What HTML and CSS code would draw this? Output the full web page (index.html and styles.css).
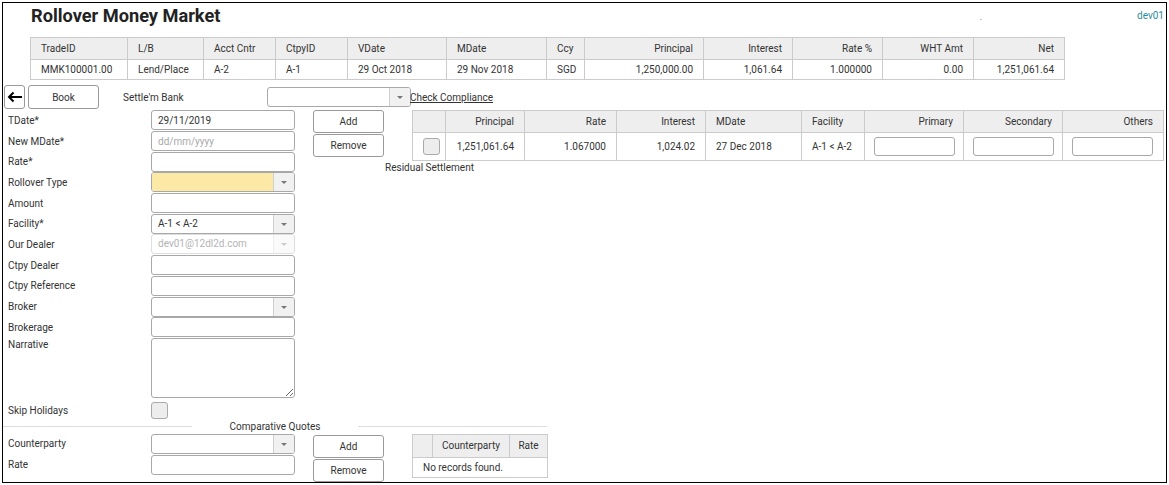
FILE: index.html
```html
<!DOCTYPE html>
<html>
<head>
    <title>Rollover Money Market</title>
    <link rel="stylesheet" href="styles.css">
</head>
<body>
    <div class="frame">
        <div class="header">
            <h1 class="title">Rollover Money Market</h1>
            <span class="dot">.</span>
            <a class="user" href="#">dev01</a>
        </div>

        <table class="grid trade">
            <colgroup>
                <col style="width:97px"><col style="width:76px"><col style="width:72px"><col style="width:72px">
                <col style="width:99px"><col style="width:100px"><col style="width:38px"><col style="width:119px">
                <col style="width:89px"><col style="width:90px"><col style="width:91px"><col style="width:91px">
            </colgroup>
            <tr>
                <th>TradeID</th><th>L/B</th><th>Acct Cntr</th><th>CtpyID</th><th>VDate</th><th>MDate</th><th>Ccy</th>
                <th class="num">Principal</th><th class="num">Interest</th><th class="num">Rate %</th><th class="num">WHT Amt</th><th class="num">Net</th>
            </tr>
            <tr>
                <td>MMK100001.00</td><td>Lend/Place</td><td>A-2</td><td>A-1</td><td>29 Oct 2018</td><td>29 Nov 2018</td><td>SGD</td>
                <td class="num">1,250,000.00</td><td class="num">1,061.64</td><td class="num">1.000000</td><td class="num">0.00</td><td class="num">1,251,061.64</td>
            </tr>
        </table>

        <div class="toolbar">
            <button class="btn back">
                <svg width="15" height="12" viewBox="0 0 15 12"><path d="M15 6H2M6.5 1.5L2 6l4.5 4.5" fill="none" stroke="#000" stroke-width="2"/></svg>
            </button>
            <button class="btn book">Book</button>
            <span class="bank-label">Settle'm Bank</span>
            <div class="select bank"><span class="val"></span><span class="arrow"></span></div>
            <a class="link" href="#">Check Compliance</a>
        </div>

        <div class="main">
            <div class="form">
                <div class="row"><label>TDate*</label><input class="field" type="text" value="29/11/2019"></div>
                <div class="row"><label>New MDate*</label><input class="field" type="text" placeholder="dd/mm/yyyy"></div>
                <div class="row"><label>Rate*</label><input class="field" type="text"></div>
                <div class="row"><label>Rollover Type</label><div class="select required"><span class="val"></span><span class="arrow"></span></div></div>
                <div class="row"><label>Amount</label><input class="field" type="text"></div>
                <div class="row"><label>Facility*</label><div class="select"><span class="val">A-1 &lt; A-2</span><span class="arrow"></span></div></div>
                <div class="row"><label>Our Dealer</label><div class="select disabled"><span class="val">dev01@12dl2d.com</span><span class="arrow"></span></div></div>
                <div class="row"><label>Ctpy Dealer</label><input class="field" type="text"></div>
                <div class="row"><label>Ctpy Reference</label><input class="field" type="text"></div>
                <div class="row"><label>Broker</label><div class="select"><span class="val"></span><span class="arrow"></span></div></div>
                <div class="row"><label>Brokerage</label><input class="field" type="text"></div>
                <div class="row tall"><label>Narrative</label><textarea class="field area"></textarea></div>
                <div class="row check-row"><label>Skip Holidays</label><span class="check"></span></div>
            </div>

            <div class="side">
                <div class="side-top">
                    <div class="btns">
                        <button class="btn">Add</button>
                        <button class="btn">Remove</button>
                    </div>
                    <table class="grid settle">
                        <colgroup>
                            <col style="width:33px"><col style="width:79px"><col style="width:92px"><col style="width:89px">
                            <col style="width:96px"><col style="width:63px"><col style="width:99px"><col style="width:99px"><col style="width:101px">
                        </colgroup>
                        <tr>
                            <th></th><th class="num">Principal</th><th class="num">Rate</th><th class="num">Interest</th>
                            <th>MDate</th><th>Facility</th><th class="num">Primary</th><th class="num">Secondary</th><th class="num">Others</th>
                        </tr>
                        <tr>
                            <td class="center"><span class="check"></span></td>
                            <td class="num">1,251,061.64</td><td class="num">1.067000</td><td class="num">1,024.02</td>
                            <td>27 Dec 2018</td><td>A-1 &lt; A-2</td>
                            <td class="cell-input"><input class="field small" type="text"></td>
                            <td class="cell-input"><input class="field small" type="text"></td>
                            <td class="cell-input"><input class="field small" type="text"></td>
                        </tr>
                    </table>
                </div>
                <div class="residual">Residual Settlement</div>
            </div>
        </div>

        <div class="legend"><span>Comparative Quotes</span></div>

        <div class="quotes">
            <div class="form">
                <div class="row"><label>Counterparty</label><div class="select"><span class="val"></span><span class="arrow"></span></div></div>
                <div class="row"><label>Rate</label><input class="field" type="text"></div>
            </div>
            <div class="btns quote-btns">
                <button class="btn">Add</button>
                <button class="btn">Remove</button>
            </div>
            <table class="grid quote-table">
                <colgroup><col style="width:20px"><col style="width:77px"><col style="width:38px"></colgroup>
                <tr><th></th><th class="center">Counterparty</th><th class="center">Rate</th></tr>
                <tr><td colspan="3">No records found.</td></tr>
            </table>
        </div>
    </div>
</body>
</html>
```

FILE: styles.css
```css
body { margin: 0; font-family: Roboto, "Liberation Sans", sans-serif; font-size: 10px; color: #333; background: #fff; }
.frame { margin: 2px; width: 1165px; height: 481px; border: 1px solid #000; box-sizing: border-box; overflow: visible; }

.header { display: flex; align-items: flex-start; height: 34px; padding-top: 1px; box-sizing: border-box; }
.title { flex: 1; margin: 0; padding-left: 28px; font-size: 18.2px; line-height: 24px; font-weight: bold; color: #222; }
.dot { line-height: 26px; color: #999; margin-right: 155px; }
.user { line-height: 24px; color: #2a8c9a; text-decoration: none; margin-right: 2px; }

.grid { border-collapse: collapse; table-layout: fixed; }
.grid th, .grid td { border: 1px solid #cbcbcb; padding: 0 10px; text-align: left; font-weight: normal; white-space: nowrap; overflow: hidden; }
.grid th { background: #eeeeee; }
.grid .num { text-align: right; }
.grid .center { text-align: center; }

.trade { margin-left: 27px; width: 1034px; }
.trade th { height: 21px; }
.trade td { height: 19px; }

.toolbar { display: flex; align-items: center; margin-top: 5px; height: 24px; margin-bottom: 1px; }
.btn { font-family: inherit; font-size: 10px; color: #333; background: #fff; border: 1px solid #9a9a9a; border-radius: 3px; height: 23px; padding: 0; cursor: pointer; }
.back { width: 21px; height: 24px; margin-left: 1px; display: flex; align-items: center; justify-content: center; }
.book { width: 71px; height: 24px; margin-left: 3px; }
.bank-label { width: 144px; margin-left: 24px; }
.bank { width: 142px; }
.link { color: #333; text-decoration: underline; margin-left: -1px; }

.main { display: flex; align-items: flex-start; }
.form { width: 292px; flex: none; }
.row { display: flex; align-items: center; height: 20.7px; }
.row label { width: 143px; padding-left: 5px; flex: none; }
.field { width: 144px; height: 20px; box-sizing: border-box; border: 1px solid #a8a8a8; border-radius: 3px; font-family: inherit; font-size: 10px; color: #333; padding: 0 6px; margin: 0; background: #fff; }
.field::placeholder { color: #a8a8a8; }
.row.tall { height: 60px; align-items: flex-start; }
.row.tall label { padding-top: 1px; }
.area { height: 60px; resize: vertical; }
.check-row { margin-top: 4px; height: 17px; }
.check { display: inline-block; width: 17px; height: 17px; box-sizing: border-box; border: 1px solid #aaa; border-radius: 3px; background: #ededed; vertical-align: middle; }

.select { display: flex; width: 144px; height: 20px; box-sizing: border-box; border: 1px solid #a8a8a8; border-radius: 3px; overflow: hidden; background: #fff; }
.select .val { flex: 1; line-height: 18px; padding-left: 6px; }
.select .arrow { width: 20px; border-left: 1px solid #cfcfcf; background: #f1f1f1; position: relative; }
.select .arrow::after { content: ""; position: absolute; left: 7px; top: 8px; border-left: 3px solid transparent; border-right: 3px solid transparent; border-top: 3px solid #777; }
.select.required .val { background: #fce9a6; }
.select.disabled { border-color: #dedede; color: #b4b4b4; }
.select.disabled .arrow { background: #fafafa; border-left-color: #eee; }
.select.disabled .arrow::after { border-top-color: #ccc; }

.side { margin-left: 18px; }
.side-top { display: flex; align-items: flex-start; }
.btns { display: flex; flex-direction: column; gap: 1px; width: 71px; }
.btns .btn { width: 71px; }
.settle { margin-left: 28px; width: 751px; }
.settle th { height: 21px; }
.settle td { height: 27px; }
.settle .cell-input { padding: 0 8px 0 9px; }
.field.small { width: 81px; height: 19px; }
.residual { padding-left: 72px; margin-top: 1px; line-height: 12px; }

.legend { display: flex; align-items: center; width: 544px; height: 14px; margin-top: 1px; }
.legend::before, .legend::after { content: ""; flex: 1; border-top: 1px solid #dcdcdc; }
.legend span { padding: 0 38px; }

.quotes { display: flex; align-items: flex-start; }
.quote-btns { margin-left: 18px; margin-top: 1px; }
.quote-table { margin-left: 28px; width: 135px; }
.quote-table th { height: 22px; padding: 0; }
.quote-table td { height: 19px; }
```
